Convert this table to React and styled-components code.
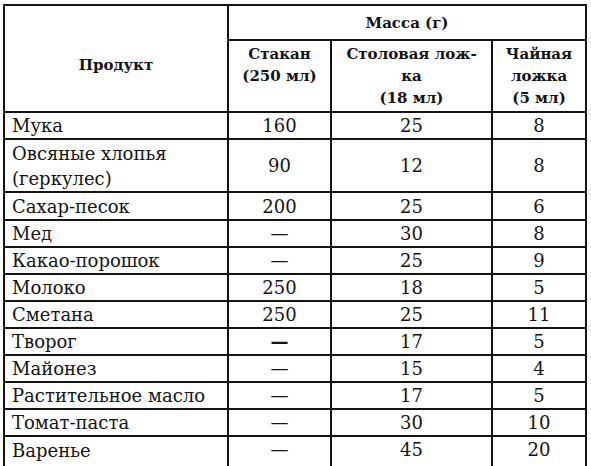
import React from "react";
import styled, { createGlobalStyle } from "styled-components";

const GlobalStyle = createGlobalStyle`
  html, body {
    margin: 0;
    padding: 0;
    background: #ffffff;
  }
  body {
    font-family: "DejaVu Serif", "Liberation Serif", serif;
    color: #141414;
  }
`;

const Frame = styled.div`
  width: 591px;
  height: 466px;
  overflow: hidden;
  padding: 4px 0 0 3px;
  box-sizing: border-box;
`;

const Table = styled.table`
  border-collapse: collapse;
  table-layout: fixed;
  width: 582px;
  font-size: 18px;
`;

const Row = styled.tr`
  height: ${(p) => p.$h}px;
`;

const HeadCell = styled.th`
  border: 2px solid #141414;
  font-size: 15px;
  font-weight: bold;
  text-align: center;
  line-height: 22px;
  padding: ${(p) => p.$pad || "0"};
  vertical-align: ${(p) => p.$valign || "middle"};
`;

const NameCell = styled.td`
  border: 2px solid #141414;
  border-bottom: ${(p) => (p.$last ? "none" : "2px solid #141414")};
  padding: 0 4px 0 7px;
  line-height: 25px;
  text-align: left;
  vertical-align: ${(p) => (p.$last ? "top" : "middle")};
  white-space: nowrap;
`;

const ValueCell = styled.td`
  border: 2px solid #141414;
  border-bottom: ${(p) => (p.$last ? "none" : "2px solid #141414")};
  padding: 0;
  line-height: 25px;
  text-align: center;
  vertical-align: ${(p) => (p.$last ? "top" : "middle")};
  font-weight: ${(p) => (p.$strong ? "bold" : "normal")};
`;

const products = [
  { name: ["Мука"], glass: "160", table: "25", tea: "8", h: 26 },
  { name: ["Овсяные хлопья", "(геркулес)"], glass: "90", table: "12", tea: "8", h: 53 },
  { name: ["Сахар-песок"], glass: "200", table: "25", tea: "6", h: 28 },
  { name: ["Мед"], glass: "—", table: "30", tea: "8", h: 27 },
  { name: ["Какао-порошок"], glass: "—", table: "25", tea: "9", h: 27 },
  { name: ["Молоко"], glass: "250", table: "18", tea: "5", h: 27 },
  { name: ["Сметана"], glass: "250", table: "25", tea: "11", h: 27 },
  { name: ["Творог"], glass: "—", table: "17", tea: "5", h: 27, strongDash: true },
  { name: ["Майонез"], glass: "—", table: "15", tea: "4", h: 27 },
  { name: ["Растительное масло"], glass: "—", table: "17", tea: "5", h: 27 },
  { name: ["Томат-паста"], glass: "—", table: "30", tea: "10", h: 27 },
  { name: ["Варенье"], glass: "—", table: "45", tea: "20", h: 34 },
];

const App = () => {
  return (
    <>
      <GlobalStyle />
      <Frame>
        <Table>
          <colgroup>
            <col style={{ width: 224 }} />
            <col style={{ width: 103 }} />
            <col style={{ width: 161 }} />
            <col style={{ width: 94 }} />
          </colgroup>
          <thead>
            <Row $h={35}>
              <HeadCell rowSpan={2} $pad="12px 0 0">
                Продукт
              </HeadCell>
              <HeadCell colSpan={3}>Масса (г)</HeadCell>
            </Row>
            <Row $h={72}>
              <HeadCell $valign="top" $pad="2px 0 0">
                Стакан
                <br />
                (250 мл)
              </HeadCell>
              <HeadCell $valign="top" $pad="2px 0 0">
                Столовая лож-
                <br />
                ка
                <br />
                (18 мл)
              </HeadCell>
              <HeadCell $valign="top" $pad="2px 0 0">
                Чайная
                <br />
                ложка
                <br />
                (5 мл)
              </HeadCell>
            </Row>
          </thead>
          <tbody>
            {products.map((p, i) => {
              const last = i === products.length - 1;
              return (
                <Row key={p.name[0]} $h={p.h}>
                  <NameCell $last={last} style={last ? { paddingTop: 1 } : undefined}>
                    {p.name.map((line, j) => (
                      <React.Fragment key={line}>
                        {j > 0 && <br />}
                        {line}
                      </React.Fragment>
                    ))}
                  </NameCell>
                  <ValueCell $last={last} $strong={p.strongDash}>
                    {p.glass}
                  </ValueCell>
                  <ValueCell $last={last}>{p.table}</ValueCell>
                  <ValueCell $last={last}>{p.tea}</ValueCell>
                </Row>
              );
            })}
          </tbody>
        </Table>
      </Frame>
    </>
  );
};

export default App;
